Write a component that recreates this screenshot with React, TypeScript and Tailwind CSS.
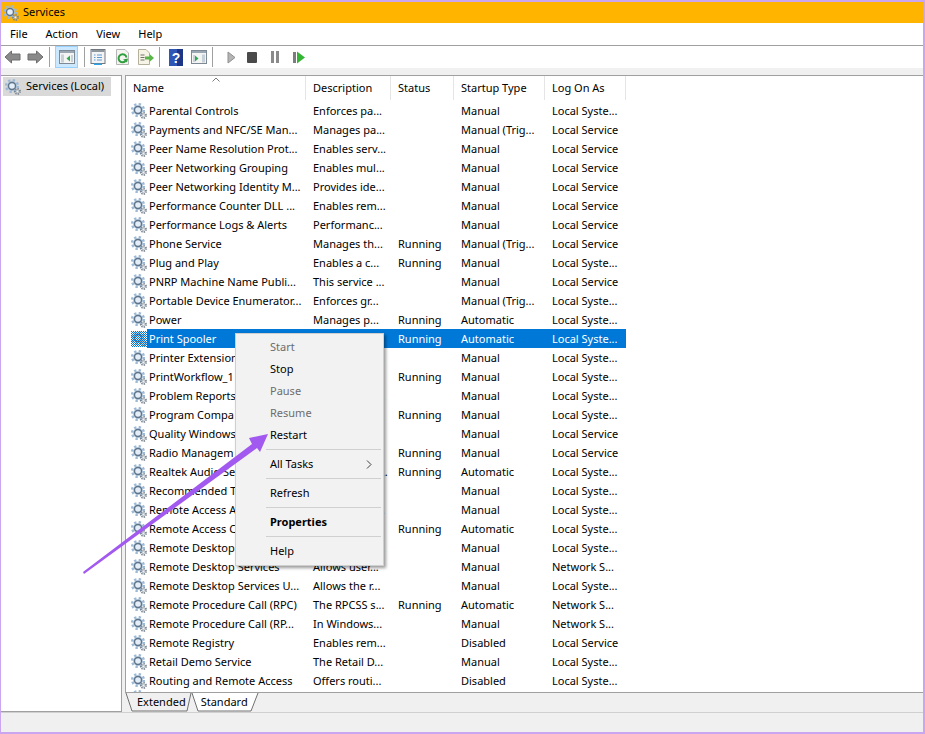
import React from "react"

type Row = { name: string; desc: string; status?: string; startup: string; logon: string; selected?: boolean }

const SYS = "Local Syste..."
const SVC = "Local Service"
const NET = "Network S..."
const TRIG = "Manual (Trig..."

const rows: Row[] = [
  { name: "Parental Controls", desc: "Enforces pa...", startup: "Manual", logon: SYS },
  { name: "Payments and NFC/SE Man...", desc: "Manages pa...", startup: TRIG, logon: SVC },
  { name: "Peer Name Resolution Prot...", desc: "Enables serv...", startup: "Manual", logon: SVC },
  { name: "Peer Networking Grouping", desc: "Enables mul...", startup: "Manual", logon: SVC },
  { name: "Peer Networking Identity M...", desc: "Provides ide...", startup: "Manual", logon: SVC },
  { name: "Performance Counter DLL ...", desc: "Enables rem...", startup: "Manual", logon: SVC },
  { name: "Performance Logs & Alerts", desc: "Performanc...", startup: "Manual", logon: SVC },
  { name: "Phone Service", desc: "Manages th...", status: "Running", startup: TRIG, logon: SVC },
  { name: "Plug and Play", desc: "Enables a c...", status: "Running", startup: "Manual", logon: SYS },
  { name: "PNRP Machine Name Publi...", desc: "This service ...", startup: "Manual", logon: SVC },
  { name: "Portable Device Enumerator...", desc: "Enforces gr...", startup: TRIG, logon: SYS },
  { name: "Power", desc: "Manages p...", status: "Running", startup: "Automatic", logon: SYS },
  { name: "Print Spooler", desc: "This service ...", status: "Running", startup: "Automatic", logon: SYS, selected: true },
  { name: "Printer Extensions", desc: "This service ...", startup: "Manual", logon: SYS },
  { name: "PrintWorkflow_1", desc: "Provides su...", status: "Running", startup: "Manual", logon: SYS },
  { name: "Problem Reports", desc: "This service ...", startup: "Manual", logon: SYS },
  { name: "Program Compa", desc: "This service ...", status: "Running", startup: "Manual", logon: SYS },
  { name: "Quality Windows", desc: "Quality Win...", startup: "Manual", logon: SVC },
  { name: "Radio Managem", desc: "Radio Mana...", status: "Running", startup: "Manual", logon: SVC },
  { name: "Realtek Audio Se", desc: "For cooperat...", status: "Running", startup: "Automatic", logon: SYS },
  { name: "Recommended T", desc: "Enables aut...", startup: "Manual", logon: SYS },
  { name: "Remote Access A", desc: "Creates a co...", startup: "Manual", logon: SYS },
  { name: "Remote Access C", desc: "Manages di...", status: "Running", startup: "Automatic", logon: SYS },
  { name: "Remote Desktop", desc: "Remote Des...", startup: "Manual", logon: SYS },
  { name: "Remote Desktop Services", desc: "Allows user...", startup: "Manual", logon: NET },
  { name: "Remote Desktop Services U...", desc: "Allows the r...", startup: "Manual", logon: SYS },
  { name: "Remote Procedure Call (RPC)", desc: "The RPCSS s...", status: "Running", startup: "Automatic", logon: NET },
  { name: "Remote Procedure Call (RP...", desc: "In Windows...", startup: "Manual", logon: NET },
  { name: "Remote Registry", desc: "Enables rem...", startup: "Disabled", logon: SVC },
  { name: "Retail Demo Service", desc: "The Retail D...", startup: "Manual", logon: SYS },
  { name: "Routing and Remote Access", desc: "Offers routi...", startup: "Disabled", logon: SYS },
]

function Gear({ selected }: { selected?: boolean }) {
  return (
    <svg width="16" height="16" viewBox="0 0 16 16" className="shrink-0">
      <circle cx="7" cy="7" r="5.8" fill="none" stroke="#9db9d6" strokeWidth="2.6" strokeDasharray="2.3 2.25" />
      <circle cx="7" cy="7" r="4.8" fill="#a9c3dc" />
      <circle cx="7" cy="7" r="3.5" fill="#e4eef8" stroke="#5f7488" strokeWidth="1.4" />
      <circle cx="12.4" cy="12.4" r="2.6" fill="none" stroke="#77838f" strokeWidth="1.8" strokeDasharray="1.3 1.1" />
      <circle cx="12.4" cy="12.4" r="1.3" fill="#eef2f6" stroke="#7f8a95" strokeWidth="0.5" />
      {selected && (
        <>
          <defs>
            <pattern id="dither" width="2" height="2" patternUnits="userSpaceOnUse">
              <rect width="1" height="1" fill="#0078d7" />
              <rect x="1" y="1" width="1" height="1" fill="#0078d7" />
            </pattern>
          </defs>
          <rect width="16" height="16" fill="url(#dither)" />
        </>
      )}
    </svg>
  )
}

function Sep() {
  return <div className="w-px h-[20px] bg-[#a0a0a0] shrink-0" />
}

function ArrowIcon({ flip }: { flip?: boolean }) {
  return (
    <svg width="17" height="14" viewBox="0 0 17 14" className={flip ? "-scale-x-100" : ""}>
      <path d="M1 7 L7.5 1 V4 H16 V10 H7.5 V13 Z" fill="#8a8a8a" stroke="#6e6e6e" strokeWidth="1" />
    </svg>
  )
}

function WindowIcon({ left }: { left?: boolean }) {
  return (
    <svg width="16" height="14" viewBox="0 0 16 14">
      <rect x="0.5" y="0.5" width="15" height="13" fill="#f4f4f4" stroke="#7d8a96" />
      <rect x="1" y="1" width="14" height="2" fill="#9aa7b3" />
      <rect x={left ? 2 : 11} y="4.5" width="3" height="8" fill="#c8d0d8" />
      <path d={left ? "M11 5.5 V11.5 L7.5 8.5 Z" : "M4 5.5 V11.5 L7.5 8.5 Z"} fill="#2fa84f" />
      <rect x={left ? 12 : 2} y="5" width="2" height="7" fill="#c8d0d8" />
    </svg>
  )
}

function Toolbar() {
  return (
    <div className="h-[22px] bg-white flex items-center pl-[2px] shrink-0">
      <div className="ml-[1px]"><ArrowIcon /></div>
      <div className="ml-[6px]"><ArrowIcon flip /></div>
      <div className="ml-[5px]"><Sep /></div>
      <div className="ml-[5px] w-[23px] h-[22px] bg-[#cce8ff] border border-[#99d1ff] flex items-center justify-center">
        <WindowIcon left />
      </div>
      <div className="ml-[6px]"><Sep /></div>
      <svg width="16" height="16" viewBox="0 0 16 16" className="ml-[5px]">
        <rect x="1" y="0.5" width="14" height="14" fill="#f3f3f3" stroke="#70777f" />
        <rect x="1.5" y="1" width="13" height="2" fill="#8d959d" />
        <path d="M4 6h1.5M7 6h5M4 8.5h1.5M7 8.5h5M4 11h1.5M7 11h5" stroke="#5b9bd5" strokeWidth="1" />
        <rect x="4" y="14.5" width="8" height="1.5" fill="#2ea3e6" />
      </svg>
      <svg width="15" height="16" viewBox="0 0 15 16" className="ml-[9px]">
        <path d="M1.5 0.5H10L13.5 4V15.5H1.5Z" fill="#f5f5f0" stroke="#b5b5b5" />
        <path d="M11.5 8.5 A4 4 0 1 0 10.5 12" fill="none" stroke="#2e9e3f" strokeWidth="2" />
        <path d="M8 10.5 L12 13.5 L13 9.5 Z" fill="#2e9e3f" />
      </svg>
      <svg width="17" height="16" viewBox="0 0 17 16" className="ml-[7px]">
        <path d="M1.5 0.5H9L12.5 4V15.5H1.5Z" fill="#f6f4e6" stroke="#b5b09a" />
        <path d="M3.5 6h4M3.5 8.5h4M3.5 11h4" stroke="#70706a" />
        <path d="M8 7.5h4.5V5L17 9l-4.5 4v-2.5H8Z" fill="#59b548" />
      </svg>
      <div className="ml-[5px]"><Sep /></div>
      <svg width="14" height="17" viewBox="0 0 14 17" className="ml-[9px]">
        <rect width="14" height="17" fill="#2f55b5" />
        <rect x="8" width="6" height="17" fill="#1d3586" />
        <text x="7" y="13.5" textAnchor="middle" fontSize="14" fontWeight="700" fontFamily="Liberation Sans, sans-serif" fill="#ffffff">?</text>
      </svg>
      <div className="ml-[8px]"><WindowIcon /></div>
      <div className="ml-[5px]"><Sep /></div>
      <svg width="9" height="13" viewBox="0 0 9 13" className="ml-[14px]">
        <path d="M1 1 L8 6.5 L1 12 Z" fill="#b5b5b5" stroke="#8f8f8f" />
      </svg>
      <div className="ml-[11px] w-[10px] h-[11px] bg-[#4a4a4a] rounded-[1px]" />
      <div className="ml-[14px] flex gap-[2px]">
        <div className="w-[3px] h-[12px] bg-[#8a8a8a]" />
        <div className="w-[3px] h-[12px] bg-[#8a8a8a]" />
      </div>
      <svg width="12" height="13" viewBox="0 0 12 13" className="ml-[14px]">
        <rect x="0" y="1" width="3" height="11" fill="#7d7d7d" />
        <path d="M4 0.5 L12 6.5 L4 12.5 Z" fill="#35b534" />
      </svg>
    </div>
  )
}

function HeaderCell({ label, className }: { label: string; className: string }) {
  return (
    <div className={`h-[24px] flex items-center pl-[7px] border-r border-[#e5e5e5] ${className}`}>{label}</div>
  )
}

function ServiceRow({ row }: { row: Row }) {
  const text = row.selected ? "text-white" : "text-black"
  return (
    <div className="h-[19px] flex items-center whitespace-nowrap">
      <div className="w-[5px] shrink-0" />
      <Gear selected={row.selected} />
      <div className={`flex items-center h-[19px] ${row.selected ? "bg-[#0078d7]" : ""} ${text}`}>
        <div className="w-[159px] pl-[2px] mt-[2px] overflow-hidden">{row.name}</div>
        <div className="w-[85px] pl-[7px] mt-[2px]">{row.desc}</div>
        <div className="w-[63px] pl-[7px] mt-[2px]">{row.status}</div>
        <div className="w-[91px] pl-[7px] mt-[2px]">{row.startup}</div>
        <div className="w-[81px] pl-[7px] mt-[2px]">{row.logon}</div>
      </div>
    </div>
  )
}

function MenuItem({ label, disabled, bold, arrow }: { label: string; disabled?: boolean; bold?: boolean; arrow?: boolean }) {
  return (
    <div className={`h-[22px] pl-[34px] flex items-center justify-between pr-[11px] ${disabled ? "text-[#6d6d6d]" : "text-black"} ${bold ? "font-bold" : ""}`}>
      <span>{label}</span>
      {arrow && (
        <svg width="6" height="9" viewBox="0 0 6 9">
          <path d="M1 0.5 L5 4.5 L1 8.5" fill="none" stroke="#404040" strokeWidth="1" />
        </svg>
      )}
    </div>
  )
}

function MenuSep() {
  return <div className="h-px bg-[#d0d0d0] ml-[30px] mr-[2px] my-[3px]" />
}

function ContextMenu() {
  return (
    <div className="absolute left-[234px] top-[331px] w-[149px] h-[233px] bg-[#f2f2f2] border border-[#cfcfcf] pt-[2px] shadow-[2px_2px_3px_rgba(0,0,0,0.4)]">
      <MenuItem label="Start" disabled />
      <MenuItem label="Stop" />
      <MenuItem label="Pause" disabled />
      <MenuItem label="Resume" disabled />
      <MenuItem label="Restart" />
      <MenuSep />
      <MenuItem label="All Tasks" arrow />
      <MenuSep />
      <MenuItem label="Refresh" />
      <MenuSep />
      <MenuItem label="Properties" bold />
      <MenuSep />
      <MenuItem label="Help" />
    </div>
  )
}

export default function App() {
  return (
    <div className="relative w-[925px] h-[734px] overflow-hidden flex flex-col bg-[#f0f0f0] border-y-2 border-l border-r-2 border-[#c9a6ef] font-['Noto_Sans',sans-serif] text-[11px] text-black">
      <div className="h-[21px] bg-[#ffb400] flex items-center pl-[2px] shrink-0">
        <Gear />
        <span className="ml-[4px]">Services</span>
      </div>
      <div className="h-[23px] bg-white flex items-center pl-[9px] gap-[18px] border-b border-[#a0a0a0] shrink-0">
        <span>File</span>
        <span>Action</span>
        <span>View</span>
        <span>Help</span>
      </div>
      <Toolbar />
      <div className="h-[7px] shrink-0" />
      <div className="flex flex-1 min-h-0">
        <div className="w-[121px] h-full bg-white border-r border-y border-[#a0a0a0] pl-[2px] pt-[1px] shrink-0">
          <div className="h-[19px] w-[108px] bg-[#d9d9d9] flex items-center pl-[2px]">
            <Gear />
            <span className="ml-[5px]">Services (Local)</span>
          </div>
        </div>
        <div className="ml-[3px] flex-1 flex flex-col min-w-0">
          <div className="flex-1 min-h-0 relative bg-white border-l border-t border-b border-[#a0a0a0] overflow-hidden">
            <div className="flex h-[25px]">
              <HeaderCell label="Name" className="w-[180px]" />
              <HeaderCell label="Description" className="w-[85px]" />
              <HeaderCell label="Status" className="w-[63px]" />
              <HeaderCell label="Startup Type" className="w-[91px]" />
              <HeaderCell label="Log On As" className="w-[81px]" />
            </div>
            <svg width="8" height="5" viewBox="0 0 8 5" className="absolute left-[86px] top-[1px]">
              <path d="M0.5 4.5 L4 1 L7.5 4.5" fill="none" stroke="#7a7a7a" />
            </svg>
            {rows.map((row) => (
              <ServiceRow key={row.name} row={row} />
            ))}
            <div className="pl-[5px] h-[19px]"><Gear /></div>
          </div>
          <div className="h-[19px] relative w-[135px] flex shrink-0">
            <svg width="135" height="19" viewBox="0 0 135 19" className="absolute left-0 top-0">
              <path d="M1 0 L7 18 H62 L66 0" fill="#f0f0f0" stroke="#707070" />
              <path d="M67 0 L73 18 H126 L133 0" fill="#ffffff" stroke="#707070" />
            </svg>
            <span className="relative ml-[12px] mt-[1px]">Extended</span>
            <span className="relative ml-[15px] mt-[1px]">Standard</span>
          </div>
        </div>
      </div>
      <div className="h-[20px] border-t border-[#d0d0d0] shrink-0" />
      <ContextMenu />
      <svg width="925" height="734" viewBox="0 0 925 734" className="absolute left-[-1px] top-[-2px] pointer-events-none">
        <path d="M83 572 L252 444 L249 438 L268 434 L260 452 L257 448 L84 574 Z" fill="#a259ef" />
      </svg>
    </div>
  )
}
